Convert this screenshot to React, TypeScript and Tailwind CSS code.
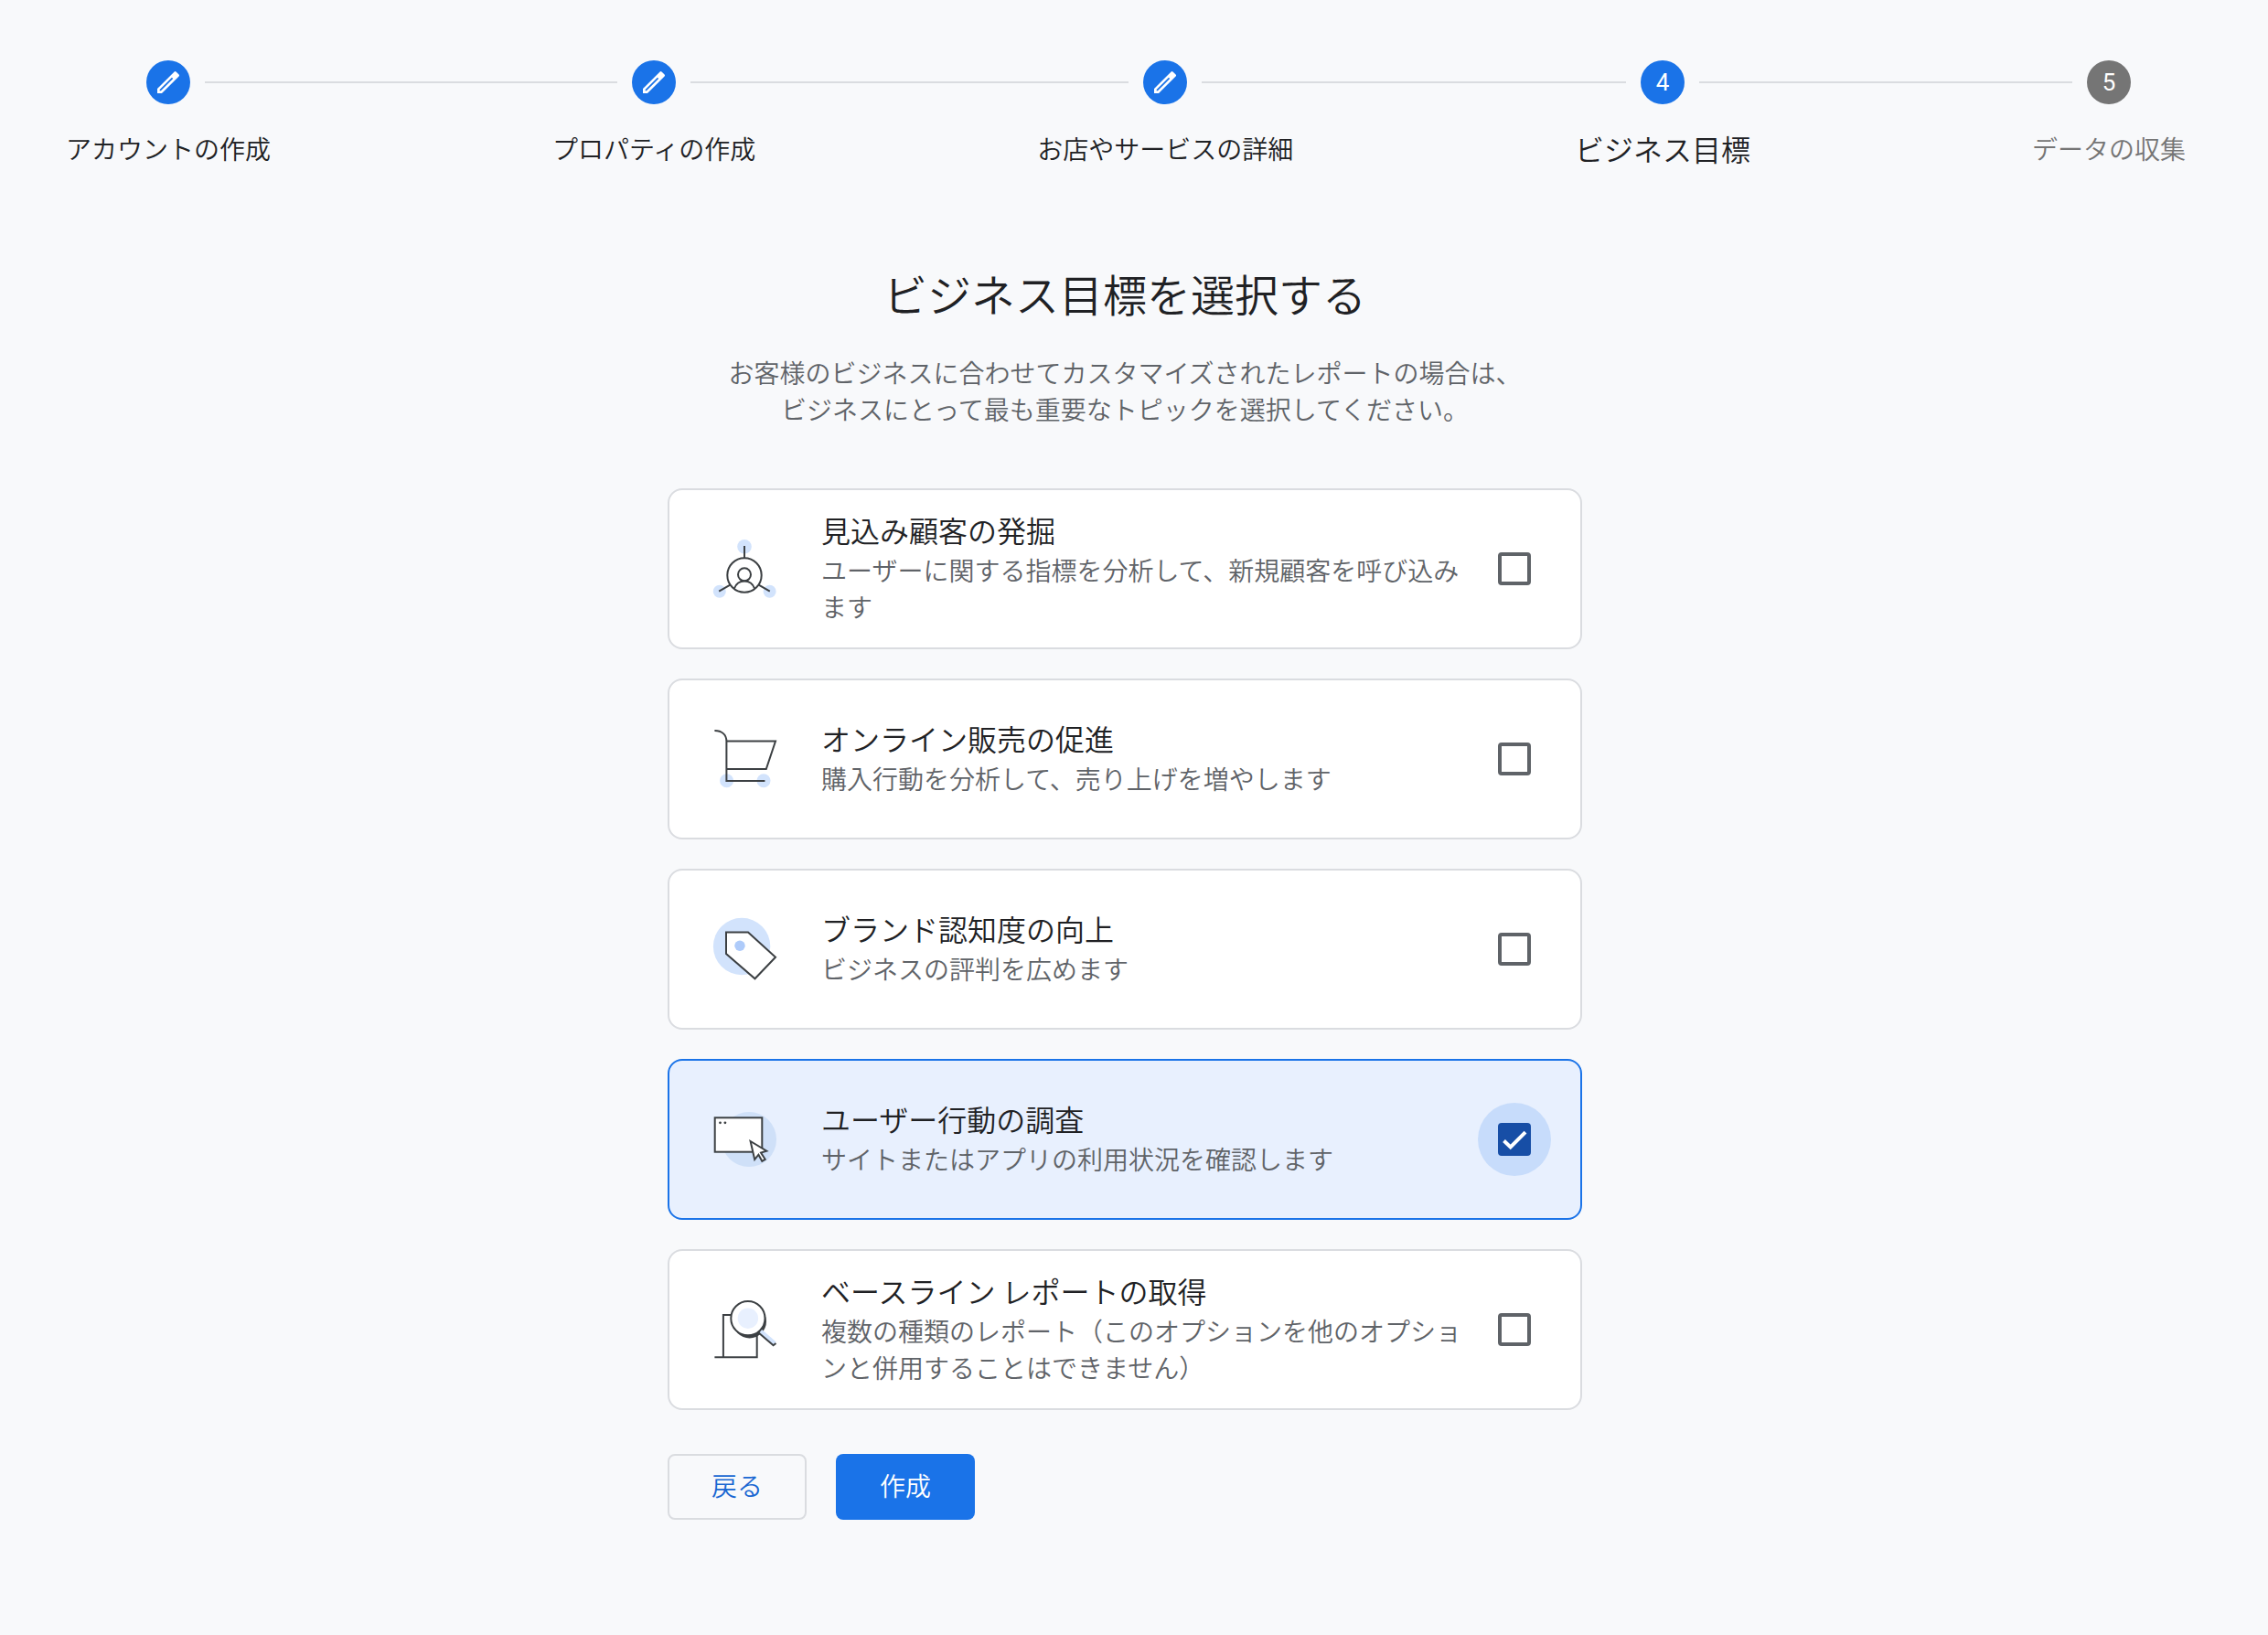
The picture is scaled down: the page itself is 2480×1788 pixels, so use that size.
import { useState } from "react";
import type { ReactNode } from "react";

type StepState = "done" | "current" | "upcoming";

interface Step {
  label: string;
  state: StepState;
}

interface Goal {
  id: string;
  title: string;
  description: string;
  icon: ReactNode;
}

const steps: Step[] = [
  { label: "アカウントの作成", state: "done" },
  { label: "プロパティの作成", state: "done" },
  { label: "お店やサービスの詳細", state: "done" },
  { label: "ビジネス目標", state: "current" },
  { label: "データの収集", state: "upcoming" },
];

const PencilIcon = () => (
  <svg viewBox="0 0 24 24" className="size-8" fill="currentColor" aria-hidden="true">
    <path
      fillRule="evenodd"
      d="M3 17.25V21h3.750L20.710 7.040a1 1 0 0 0 0-1.410l-2.340-2.340a1 1 0 0 0-1.410 0ZM5 18.080V19h.920L15.900 9.020 14.980 8.100Z"
    />
  </svg>
);

const LeadsIcon = () => (
  <svg viewBox="0 0 72 72" className="size-[72px] shrink-0" fill="none" aria-hidden="true">
    <circle cx="36" cy="11.7" r="7.8" fill="#d2e3fc" />
    <circle cx="8.8" cy="60.7" r="7" fill="#d2e3fc" />
    <circle cx="63.6" cy="60.7" r="7" fill="#d2e3fc" />
    <g stroke="#3c4043" strokeWidth="2">
      <circle cx="36" cy="43" r="18.7" />
      <circle cx="36" cy="42.3" r="7" />
      <path d="M24.9 57.6C26.8 52.6 31 49.6 36 49.6s9.2 3 11.1 8" />
      <path d="M36 11v13.3M8.2 60.7l12.6-7.3M63.8 60.7l-12.6-7.3" />
    </g>
  </svg>
);

const CartIcon = () => (
  <svg viewBox="0 0 72 72" className="size-[72px] shrink-0" fill="none" aria-hidden="true">
    <circle cx="16.6" cy="59.7" r="7.5" fill="#d2e3fc" />
    <circle cx="57" cy="59.7" r="7.5" fill="#d2e3fc" />
    <g stroke="#3c4043" strokeWidth="2">
      <path d="M3.4 5c8 0 13 4.5 13 11.5V60H58.4" />
      <path d="M16.4 16.5H70L59.8 47H16.4" />
    </g>
  </svg>
);

const TagIcon = () => (
  <svg viewBox="0 0 72 72" className="size-[72px] shrink-0" fill="none" aria-hidden="true">
    <circle cx="33.1" cy="33" r="31.2" fill="#d2e3fc" />
    <path
      d="M16 17.5H40L70 44.7 47.5 68.3 16 41Z"
      fill="#fff"
      stroke="#3c4043"
      strokeWidth="2"
    />
    <circle cx="31" cy="32.3" r="5.7" fill="#aecbfa" />
  </svg>
);

const BrowserIcon = () => (
  <svg viewBox="0 0 72 72" className="size-[72px] shrink-0" fill="none" aria-hidden="true">
    <circle cx="41" cy="36" r="30" fill="#cfe0f8" />
    <rect x="3.7" y="12.3" width="51.6" height="37.4" fill="#fff" stroke="#3c4043" strokeWidth="2" />
    <circle cx="9.5" cy="17.8" r="1.4" fill="#3c4043" />
    <circle cx="14.9" cy="17.8" r="1.4" fill="#3c4043" />
    <path
      d="M42.6 38 60.3 48.6 54 50.6 58.7 57.8 55.3 59.8 51.4 52.7 47.2 58Z"
      fill="#fff"
      stroke="#3c4043"
      strokeWidth="2"
    />
  </svg>
);

const ReportIcon = () => (
  <svg viewBox="0 0 72 72" className="size-[72px] shrink-0" fill="none" aria-hidden="true">
    <path d="M12.9 66.3V20H49.7V66.3M3.4 66.3H50.7" stroke="#3c4043" strokeWidth="2" />
    <circle cx="41.6" cy="27" r="18.4" fill="#3c4043" />
    <circle cx="39.9" cy="23.7" r="18.6" fill="#fff" stroke="#3c4043" strokeWidth="2" />
    <circle cx="39.9" cy="23.7" r="11.2" fill="#e8f0fe" />
    <path d="M53.5 38 69 51.5" stroke="#d2e3fc" strokeWidth="5" />
    <path d="M51.3 39.3 67.6 53.3 70.5 51" stroke="#3c4043" strokeWidth="2" />
  </svg>
);

const goals: Goal[] = [
  {
    id: "leads",
    title: "見込み顧客の発掘",
    description: "ユーザーに関する指標を分析して、新規顧客を呼び込みます",
    icon: <LeadsIcon />,
  },
  {
    id: "sales",
    title: "オンライン販売の促進",
    description: "購入行動を分析して、売り上げを増やします",
    icon: <CartIcon />,
  },
  {
    id: "brand",
    title: "ブランド認知度の向上",
    description: "ビジネスの評判を広めます",
    icon: <TagIcon />,
  },
  {
    id: "behavior",
    title: "ユーザー行動の調査",
    description: "サイトまたはアプリの利用状況を確認します",
    icon: <BrowserIcon />,
  },
  {
    id: "baseline",
    title: "ベースライン レポートの取得",
    description: "複数の種類のレポート（このオプションを他のオプションと併用することはできません）",
    icon: <ReportIcon />,
  },
];

function Stepper() {
  return (
    <ol className="flex pr-[70px] pl-[72px]">
      {steps.map((step, idx) => {
        const isFirst = idx === 0;
        const isLast = idx === steps.length - 1;
        let labelStyle = "text-[28px] text-[#202124]";
        if (step.state === "current") labelStyle = "text-[32px] text-[#202124]";
        if (step.state === "upcoming") labelStyle = "text-[28px] text-[#757575]";
        return (
          <li key={step.label} className={isLast ? "flex flex-none" : "flex flex-auto"}>
            <button
              type="button"
              aria-current={step.state === "current" ? "step" : undefined}
              className="flex shrink-0 flex-col gap-7"
            >
              <span className="flex w-full items-center gap-4">
                <span className={`h-0.5 flex-1 ${isFirst ? "" : "bg-[#dadce0]"}`} />
                <span
                  className={`flex size-12 items-center justify-center rounded-full font-[Roboto,sans-serif] text-[26px] font-normal text-white ${
                    step.state === "upcoming" ? "bg-[#757575]" : "bg-[#1a73e8]"
                  }`}
                >
                  {step.state === "done" ? <PencilIcon /> : idx + 1}
                </span>
                <span className={`h-0.5 flex-1 ${isLast ? "" : "bg-[#dadce0]"}`} />
              </span>
              <span className={`leading-10 whitespace-nowrap ${labelStyle}`}>{step.label}</span>
            </button>
            {!isLast && <span className="mt-[23px] h-0.5 flex-1 bg-[#dadce0]" />}
          </li>
        );
      })}
    </ol>
  );
}

function GoalCard({
  goal,
  checked,
  onToggle,
}: {
  goal: Goal;
  checked: boolean;
  onToggle: () => void;
}) {
  return (
    <label
      htmlFor={goal.id}
      className={`flex min-h-44 cursor-pointer items-center rounded-2xl border-2 pr-8 pl-[46px] ${
        checked ? "border-[#1a73e8] bg-[#e8f0fe]" : "border-[#dadce0] bg-white"
      }`}
    >
      {goal.icon}
      <span className="ml-12 flex-1 pb-0.5">
        <span className="mb-1 block text-[32px] leading-10 text-[#202124]">{goal.title}</span>
        <span className="block text-[28px] leading-10 text-[#5f6368]">{goal.description}</span>
      </span>
      <span
        className={`grid size-20 shrink-0 place-items-center rounded-full ${
          checked ? "bg-[#c7dcfb]" : ""
        }`}
      >
        <input
          id={goal.id}
          type="checkbox"
          checked={checked}
          onChange={onToggle}
          className="col-start-1 row-start-1 size-9 appearance-none rounded-sm border-4 border-[#5f6368] checked:border-[#174ea6] checked:bg-[#174ea6]"
        />
        {checked && (
          <svg
            viewBox="0 0 36 36"
            className="pointer-events-none col-start-1 row-start-1 size-9"
            fill="none"
            aria-hidden="true"
          >
            <path d="M6.5 19.5 13.7 26.4 30 10.2" stroke="#fff" strokeWidth="4" />
          </svg>
        )}
      </span>
    </label>
  );
}

export default function App() {
  const [selected, setSelected] = useState<string[]>(["behavior"]);

  const toggle = (id: string) => {
    setSelected((prev) => {
      if (prev.includes(id)) return prev.filter((item) => item !== id);
      // baseline cannot be combined with the other goals
      if (id === "baseline") return [id];
      return [...prev.filter((item) => item !== "baseline"), id];
    });
  };

  return (
    <div
      lang="ja"
      className="min-h-screen bg-[#f8f9fb] pt-[66px] pr-5 pb-[126px] font-['Noto_Sans_CJK_JP',sans-serif] font-[350]"
    >
      <Stepper />

      <main className="mx-auto mt-[106px] max-w-[1000px]">
        <h1 className="text-center text-5xl leading-16 text-[#202124]">
          ビジネス目標を選択する
        </h1>
        <p className="mt-[35px] text-center text-[28px] leading-10 text-[#5f6368]">
          お客様のビジネスに合わせてカスタマイズされたレポートの場合は、
          <br />
          ビジネスにとって最も重要なトピックを選択してください。
        </p>

        <div className="mt-[67px] flex flex-col gap-8">
          {goals.map((goal) => (
            <GoalCard
              key={goal.id}
              goal={goal}
              checked={selected.includes(goal.id)}
              onToggle={() => toggle(goal.id)}
            />
          ))}
        </div>

        <div className="mt-12 flex gap-8">
          <button
            type="button"
            className="h-[72px] rounded-lg border-2 border-[#dadce0] px-[46px] pb-1 text-[28px] text-[#1967d2]"
          >
            戻る
          </button>
          <button
            type="button"
            className="h-[72px] rounded-lg bg-[#1a73e8] px-12 pb-1 text-[28px] text-white"
          >
            作成
          </button>
        </div>
      </main>
    </div>
  );
}
